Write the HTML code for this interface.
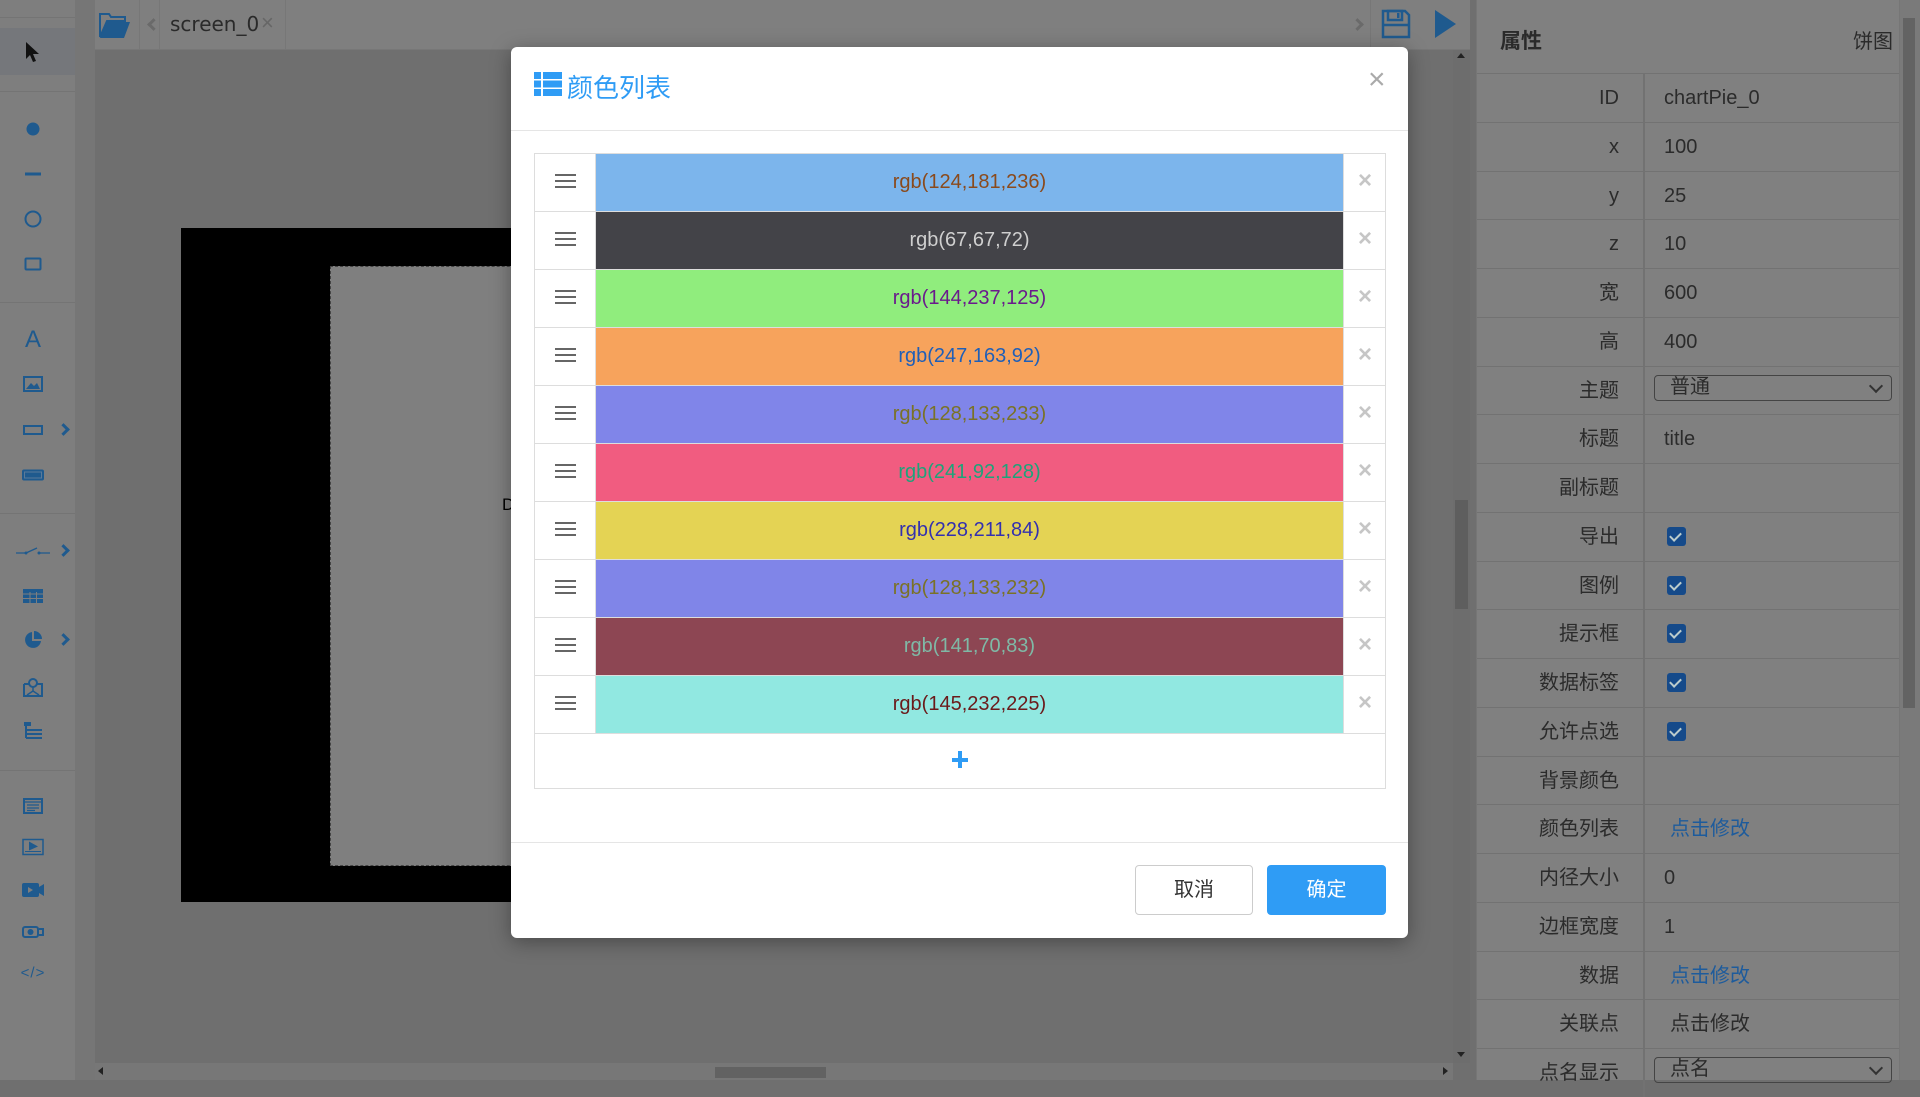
<!DOCTYPE html>
<html><head><meta charset="utf-8">
<style>
*{box-sizing:border-box;margin:0;padding:0}
body{width:1920px;height:1080px;overflow:hidden;background:#6f6f6f;font-family:"Liberation Sans","Noto Sans CJK SC",sans-serif;position:relative}
.abs{position:absolute}
#side{left:0;top:0;width:75px;height:1080px;background:#7e7e7e}
#gap{left:75px;top:0;width:20px;height:1080px;background:#767676}
#top{left:95px;top:0;width:1375px;height:50px;background:#7f7f7f;border-bottom:1px solid #777}
.ic{position:absolute;left:33px;transform:translate(-50%,-50%)}
.chev{position:absolute;left:60px;width:9px;height:9px;border-right:3px solid #1f5a8e;border-top:3px solid #1f5a8e;transform:rotate(45deg)}
.sep{position:absolute;left:0;width:75px;height:1px;background:#747474}
#panel{left:1476px;top:0;width:424px;height:1080px;background:#808080;border-left:1px solid #767676;border-right:1px solid #767676}
.prow{position:absolute;left:0;width:422px;height:48.75px;border-top:1px solid #727272;font-size:20px;color:#2b2b2b}
.prow .l{position:absolute;left:0;width:168px;height:100%;border-right:2px solid #727272;text-align:right;padding-right:24px;line-height:48px}
.prow .v{position:absolute;left:187px;line-height:48px}
.cb{position:absolute;left:190px;top:14px;width:19px;height:19px;background:#154a8a;border-radius:3px}
.cb:after{content:"";position:absolute;left:5px;top:3px;width:5px;height:9px;border-right:2.5px solid #bcc;border-bottom:2.5px solid #bcc;transform:rotate(45deg)}
.sel{position:absolute;left:177px;top:8px;width:238px;height:26px;border:1.5px solid #444;border-radius:4px;line-height:22px;padding-left:15px}
.sel:after{content:"";position:absolute;right:10px;top:5px;width:8px;height:8px;border-right:2px solid #333;border-bottom:2px solid #333;transform:rotate(45deg)}
.link{color:#1d5b9c}
#modal{left:511px;top:47px;width:897px;height:891px;background:#fff;border-radius:6px;box-shadow:0 4px 20px rgba(0,0,0,.35)}
.row{position:absolute;left:23px;width:852px;height:58px;border:1px solid #ddd;border-bottom:none}
.row .h{position:absolute;left:20px;top:20px;width:21px;height:14px;border-top:2px solid #666;border-bottom:2px solid #666}
.row .h:after{content:"";position:absolute;left:0;top:4px;width:21px;height:2px;background:#666}
.row .c{position:absolute;left:60px;top:0;width:749px;height:57px;text-align:center;line-height:57px;font-size:20px;border-left:1px solid #ddd;border-right:1px solid #ddd}
.row .x{position:absolute;left:823px;top:13px;font-size:24px;color:#c6c6c6;font-weight:bold}
</style></head><body>
<div id="side" class="abs">
 <div class="abs" style="left:0;top:28px;width:75px;height:47px;background:#75777b"></div>
 <svg class="ic" style="top:52px" width="18" height="22" viewBox="0 0 18 22"><path d="M2 1 L2 18 L6 14 L9 21 L12 20 L9 13 L15 13 Z" fill="#111"/></svg>
 <div class="sep" style="top:17px"></div><div class="sep" style="top:91px"></div>
 <div class="ic" style="top:129px;width:13px;height:13px;border-radius:50%;background:#1f5a8e"></div>
 <div class="ic" style="top:174px;width:16px;height:3px;background:#1f5a8e"></div>
 <div class="ic" style="top:219px;width:17px;height:17px;border-radius:50%;border:2px solid #1f5a8e"></div>
 <div class="ic" style="top:264px;width:17px;height:13px;border-radius:2px;border:2px solid #1f5a8e"></div>
 <div class="sep" style="top:302px"></div>
 <div class="ic" style="top:340px;color:#1f5a8e;font-size:24px">A</div>
 <svg class="ic" style="top:384px" width="20" height="16"><rect x="1" y="1" width="18" height="14" fill="none" stroke="#1f5a8e" stroke-width="2"/><path d="M3 13 L8 7 L11 10 L14 7 L17 13Z" fill="#1f5a8e"/></svg>
 <div class="ic" style="top:430px;width:20px;height:10px;border:2px solid #1f5a8e"></div><div class="chev" style="top:425px;left:59px"></div>
 <div class="ic" style="top:475px;width:22px;height:11px;border:2px solid #1f5a8e;border-radius:2px;background:#1f5a8e;box-shadow:inset 0 0 0 1px #5a7a99"></div>
 <div class="sep" style="top:513px"></div>
 <svg class="ic" style="top:551px" width="34" height="10"><path d="M0 7 H10 M10 7 L21 2 M22 7 H34" stroke="#1f5a8e" stroke-width="1.3" fill="none"/><circle cx="10" cy="7" r="1.5" fill="#1f5a8e"/><circle cx="23" cy="7" r="1.5" fill="#1f5a8e"/></svg><div class="chev" style="top:546px;left:59px"></div>
 <svg class="ic" style="top:596px" width="20" height="14"><rect width="20" height="14" fill="#1f5a8e"/><path d="M0 5H20M0 9.5H20M7 3V14M13.5 3V14" stroke="#7e7e7e" stroke-width="1"/></svg>
 <svg class="ic" style="top:640px" width="20" height="20"><path d="M9 2 A8 8 0 1 0 18 11 L9 11Z" fill="#1f5a8e"/><path d="M11 1 A8 8 0 0 1 19 9 L11 9Z" fill="#1f5a8e"/></svg><div class="chev" style="top:635px;left:59px"></div>
 <svg class="ic" style="top:687px" width="20" height="20"><path d="M1 7H6M14 7H19V19H1V7" stroke="#1f5a8e" stroke-width="2" fill="none"/><circle cx="10" cy="6" r="4" fill="none" stroke="#1f5a8e" stroke-width="2"/><path d="M10 10 L10 14 M4 18 L10 14 L16 18" stroke="#1f5a8e" stroke-width="1.5" fill="none"/></svg>
 <svg class="ic" style="top:731px" width="20" height="18"><rect x="1" y="0" width="7" height="4" fill="#1f5a8e"/><path d="M3 4V16M3 8H19M3 12H19M3 16H19" stroke="#1f5a8e" stroke-width="2"/></svg>
 <div class="sep" style="top:770px"></div>
 <svg class="ic" style="top:806px" width="20" height="16"><rect x="1" y="1" width="18" height="14" fill="none" stroke="#1f5a8e" stroke-width="2"/><path d="M1 4H19M4 7H16M4 10H16M4 12.5H12" stroke="#1f5a8e" stroke-width="1.2"/></svg>
 <svg class="ic" style="top:847px" width="22" height="17"><rect x="1" y="1" width="20" height="15" fill="none" stroke="#1f5a8e" stroke-width="1.5"/><path d="M7 3 L16 8 L7 12Z" fill="#1f5a8e"/><path d="M3 13H19" stroke="#1f5a8e"/></svg>
 <svg class="ic" style="top:890px" width="22" height="14"><rect x="0" y="0" width="17" height="14" rx="2" fill="#1f5a8e"/><path d="M17 4 L22 1V13L17 10Z" fill="#1f5a8e"/><path d="M6 4L11 7L6 10Z" fill="#7e7e7e"/></svg>
 <svg class="ic" style="top:932px" width="22" height="12"><rect x="1" y="1" width="15" height="10" rx="2" fill="none" stroke="#1f5a8e" stroke-width="2"/><circle cx="8.5" cy="6" r="3" fill="#1f5a8e"/><path d="M17 3H21V9H17" stroke="#1f5a8e" stroke-width="2" fill="none"/></svg>
 <div class="ic" style="top:973px;color:#1f5a8e;font-size:15px;letter-spacing:1px">&lt;/&gt;</div>
</div>
<div id="gap" class="abs"></div>
<div id="top" class="abs">
 <svg class="abs" style="left:4px;top:11px" width="32" height="28"><path d="M1 3 H10 L12 6 H26 V10 H8 L1 26Z" fill="none" stroke="#1f5a8e" stroke-width="2"/><path d="M8 11 H31 L25 27 H1Z" fill="#1f5a8e"/></svg>
 <div class="abs" style="left:44px;top:0;width:1px;height:50px;background:#777"></div>
 <div class="abs" style="left:54px;top:20px;width:9px;height:9px;border-left:3px solid #6a6a6a;border-bottom:3px solid #6a6a6a;transform:rotate(45deg)"></div>
 <div class="abs" style="left:64px;top:0;width:1px;height:50px;background:#777"></div>
 <div class="abs" style="left:75px;top:12px;font-size:20px;color:#2a2a2a;font-family:'DejaVu Sans',sans-serif">screen_0</div>
 <div class="abs" style="left:166px;top:10px;font-size:22px;color:#666">×</div>
 <div class="abs" style="left:190px;top:0;width:1px;height:50px;background:#777"></div>
 <div class="abs" style="left:1258px;top:20px;width:9px;height:9px;border-right:3px solid #6a6a6a;border-top:3px solid #6a6a6a;transform:rotate(45deg)"></div>
 <div class="abs" style="left:1275px;top:0;width:1px;height:50px;background:#777"></div>
 <svg class="abs" style="left:1286px;top:9px" width="30" height="30"><path d="M2 2H24L28 6V28H2Z" fill="none" stroke="#1f5a8e" stroke-width="2.5"/><rect x="7" y="2" width="14" height="9" fill="none" stroke="#1f5a8e" stroke-width="2.5"/><rect x="16" y="4" width="2.5" height="5" fill="#1f5a8e"/><path d="M2 16H28" stroke="#1f5a8e" stroke-width="2.5"/></svg>
 <svg class="abs" style="left:1340px;top:10px" width="22" height="28"><path d="M0 0 L21 14 L0 28Z" fill="#1f5a8e"/></svg>
</div>
<!-- canvas -->
<div class="abs" style="left:181px;top:228px;width:340px;height:674px;background:#000"></div>
<div class="abs" style="left:330px;top:266px;width:200px;height:600px;background:#7f7f7f;border:1px dashed #444;border-right:none"></div>
<div class="abs" style="left:502px;top:495px;font-size:17px;color:#000">D</div>
<div class="abs" style="left:1453px;top:50px;width:17px;height:1013px;background:#6d6d6d"></div>
<div class="abs" style="left:1457px;top:53px;width:0;height:0;border-left:4px solid transparent;border-right:4px solid transparent;border-bottom:5px solid #222"></div>
<div class="abs" style="left:1457px;top:1052px;width:0;height:0;border-left:4px solid transparent;border-right:4px solid transparent;border-top:5px solid #222"></div>
<div class="abs" style="left:1455px;top:500px;width:13px;height:109px;background:#5e5e5e"></div>
<div class="abs" style="left:95px;top:1063px;width:1358px;height:17px;background:#777"></div>
<div class="abs" style="left:715px;top:1067px;width:111px;height:11px;background:#626262"></div>
<div class="abs" style="left:1443px;top:1067px;width:0;height:0;border-top:4px solid transparent;border-bottom:4px solid transparent;border-left:5px solid #222"></div>
<div class="abs" style="left:98px;top:1067px;width:0;height:0;border-top:4px solid transparent;border-bottom:4px solid transparent;border-right:5px solid #222"></div>
<!-- panel -->
<div id="panel" class="abs">
 <div class="abs" style="left:23px;top:25px;font-size:21px;font-weight:bold;color:#2a2a2a">属性</div>
 <div class="abs" style="right:6px;top:25px;font-size:20px;color:#2a2a2a">饼图</div>
 <div class="prow" style="top:73px"><div class="l">ID</div><div class="v">chartPie_0</div></div>
 <div class="prow" style="top:121.75px"><div class="l">x</div><div class="v">100</div></div>
 <div class="prow" style="top:170.5px"><div class="l">y</div><div class="v">25</div></div>
 <div class="prow" style="top:219.25px"><div class="l">z</div><div class="v">10</div></div>
 <div class="prow" style="top:268px"><div class="l">宽</div><div class="v">600</div></div>
 <div class="prow" style="top:316.75px"><div class="l">高</div><div class="v">400</div></div>
 <div class="prow" style="top:365.5px"><div class="l">主题</div><div class="sel">普通</div></div>
 <div class="prow" style="top:414.25px"><div class="l">标题</div><div class="v">title</div></div>
 <div class="prow" style="top:463px"><div class="l">副标题</div></div>
 <div class="prow" style="top:511.75px"><div class="l">导出</div><div class="cb"></div></div>
 <div class="prow" style="top:560.5px"><div class="l">图例</div><div class="cb"></div></div>
 <div class="prow" style="top:609.25px"><div class="l">提示框</div><div class="cb"></div></div>
 <div class="prow" style="top:658px"><div class="l">数据标签</div><div class="cb"></div></div>
 <div class="prow" style="top:706.75px"><div class="l">允许点选</div><div class="cb"></div></div>
 <div class="prow" style="top:755.5px"><div class="l">背景颜色</div></div>
 <div class="prow" style="top:804.25px"><div class="l">颜色列表</div><div class="v link" style="left:193px">点击修改</div></div>
 <div class="prow" style="top:853px"><div class="l">内径大小</div><div class="v">0</div></div>
 <div class="prow" style="top:901.75px"><div class="l">边框宽度</div><div class="v">1</div></div>
 <div class="prow" style="top:950.5px"><div class="l">数据</div><div class="v link" style="left:193px">点击修改</div></div>
 <div class="prow" style="top:999.25px"><div class="l">关联点</div><div class="v" style="left:193px">点击修改</div></div>
 <div class="prow" style="top:1048px"><div class="l">点名显示</div><div class="sel">点名</div></div>
</div>
<div class="abs" style="left:1900px;top:0;width:20px;height:1080px;background:#7a7a7a"></div>
<div class="abs" style="left:1903px;top:18px;width:12px;height:690px;background:#636363"></div>
<!-- modal -->
<div id="modal" class="abs">
 <svg class="abs" style="left:23px;top:25px" width="28" height="24"><g fill="#2f9cf5"><rect x="0" y="0" width="7" height="7"/><rect x="9" y="0" width="19" height="7"/><rect x="0" y="8.5" width="7" height="7"/><rect x="9" y="8.5" width="19" height="7"/><rect x="0" y="17" width="7" height="7"/><rect x="9" y="17" width="19" height="7"/></g></svg>
 <div class="abs" style="left:56px;top:21px;font-size:26px;color:#2f9cf5">颜色列表</div>
 <div class="abs" style="left:857px;top:16px;font-size:30px;color:#aaa">×</div>
 <div class="abs" style="left:0;top:83px;width:897px;height:1px;background:#e5e5e5"></div>
 <div class="row" style="top:106px"><div class="h"></div><div class="c" style="background:rgb(124,181,236);color:#8a4a1c">rgb(124,181,236)</div><div class="x">×</div></div>
 <div class="row" style="top:164px"><div class="h"></div><div class="c" style="background:rgb(67,67,72);color:#cfcfcf">rgb(67,67,72)</div><div class="x">×</div></div>
 <div class="row" style="top:222px"><div class="h"></div><div class="c" style="background:rgb(144,237,125);color:#6a1a8c">rgb(144,237,125)</div><div class="x">×</div></div>
 <div class="row" style="top:280px"><div class="h"></div><div class="c" style="background:rgb(247,163,92);color:#1f5fb8">rgb(247,163,92)</div><div class="x">×</div></div>
 <div class="row" style="top:338px"><div class="h"></div><div class="c" style="background:rgb(128,133,233);color:#7a7226">rgb(128,133,233)</div><div class="x">×</div></div>
 <div class="row" style="top:396px"><div class="h"></div><div class="c" style="background:rgb(241,92,128);color:#1ea37a">rgb(241,92,128)</div><div class="x">×</div></div>
 <div class="row" style="top:454px"><div class="h"></div><div class="c" style="background:rgb(228,211,84);color:#3330b0">rgb(228,211,84)</div><div class="x">×</div></div>
 <div class="row" style="top:512px"><div class="h"></div><div class="c" style="background:rgb(128,133,232);color:#7a7226">rgb(128,133,232)</div><div class="x">×</div></div>
 <div class="row" style="top:570px"><div class="h"></div><div class="c" style="background:rgb(141,70,83);color:#7fb9a6">rgb(141,70,83)</div><div class="x">×</div></div>
 <div class="row" style="top:628px"><div class="h"></div><div class="c" style="background:rgb(145,232,225);color:#6b1a1a">rgb(145,232,225)</div><div class="x">×</div></div>
 <div class="abs" style="left:23px;top:686px;width:852px;height:56px;border:1px solid #ddd"></div>
 <div class="abs" style="left:441px;top:704px;width:16px;height:16px">
  <div class="abs" style="left:6px;top:0;width:4px;height:17px;background:#2f9cf5"></div>
  <div class="abs" style="left:0;top:6.5px;width:16px;height:4px;background:#2f9cf5"></div></div>
 <div class="abs" style="left:0;top:795px;width:897px;height:1px;background:#e5e5e5"></div>
 <div class="abs" style="left:624px;top:818px;width:118px;height:50px;border:1px solid #ccc;border-radius:4px;text-align:center;line-height:48px;font-size:20px;color:#333">取消</div>
 <div class="abs" style="left:756px;top:818px;width:119px;height:50px;background:#2f9cf5;border-radius:4px;text-align:center;line-height:50px;font-size:20px;color:#fff">确定</div>
</div>
</body></html>
